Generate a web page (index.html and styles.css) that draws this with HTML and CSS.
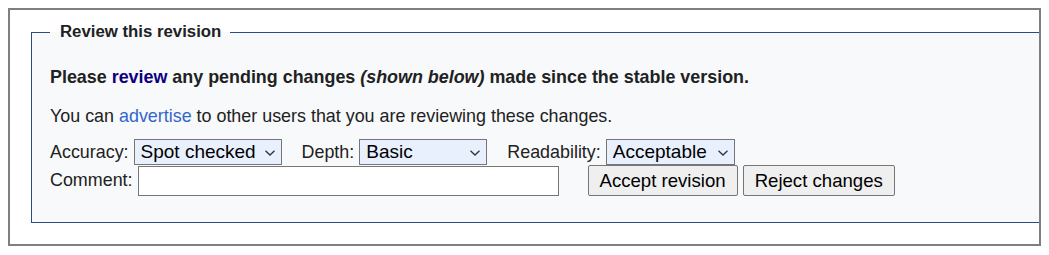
FILE: index.html
```html
<!DOCTYPE html>
<html lang="en">
<head>
<meta charset="utf-8">
<title>Review this revision</title>
<link rel="stylesheet" href="styles.css">
</head>
<body>
<div class="frame">
  <fieldset class="review">
    <legend class="review-legend">Review this revision</legend>
    <p class="lead">Please <a class="link-visited" href="#">review</a> any pending changes <i>(shown below)</i> made since the stable version.</p>
    <p class="note">You can <a class="link" href="#">advertise</a> to other users that you are reviewing these changes.</p>
    <div class="ratings">
      <label class="field-label" for="acc">Accuracy:</label>
      <span class="select-wrap">
        <select id="acc" class="select sel-acc"><option>Spot checked</option></select>
        <svg class="chev" viewBox="0 0 10 6" width="10" height="6" aria-hidden="true"><path d="M0.5 0.8 L5 5 L9.5 0.8" fill="none" stroke="#333" stroke-width="1.3"/></svg>
      </span>
      <label class="field-label gap" for="dep">Depth:</label>
      <span class="select-wrap">
        <select id="dep" class="select sel-dep"><option>Basic</option></select>
        <svg class="chev" viewBox="0 0 10 6" width="10" height="6" aria-hidden="true"><path d="M0.5 0.8 L5 5 L9.5 0.8" fill="none" stroke="#333" stroke-width="1.3"/></svg>
      </span>
      <label class="field-label gap" for="rea">Readability:</label>
      <span class="select-wrap">
        <select id="rea" class="select sel-rea"><option>Acceptable</option></select>
        <svg class="chev" viewBox="0 0 10 6" width="10" height="6" aria-hidden="true"><path d="M0.5 0.8 L5 5 L9.5 0.8" fill="none" stroke="#333" stroke-width="1.3"/></svg>
      </span>
    </div>
    <div class="actions">
      <label class="field-label" for="cmt">Comment:</label>
      <input id="cmt" class="comment" type="text">
      <button class="btn btn-accept" type="button">Accept revision</button>
      <button class="btn" type="button">Reject changes</button>
    </div>
  </fieldset>
</div>
</body>
</html>
```

FILE: styles.css
```css
html, body {
  margin: 0;
  padding: 0;
  background: #ffffff;
}
body {
  margin: 8px;
  font-family: "Liberation Sans", Arial, sans-serif;
  font-size: 17.9px;
  color: #202122;
}
.frame {
  border: 2px solid #7f7f7f;
  padding: 12px 0 21px 21px;
  overflow: hidden;
}
.review {
  margin: 0;
  border: 1px solid #2a4b8d;
  border-right: none;
  background: #f8f9fa;
  padding: 24px 0 26px 18px;
}
.review-legend {
  font-weight: bold;
  font-size: 16.8px;
  padding: 0 9px 0 10px;
  line-height: 20px;
}
p {
  margin: 0 0 17px;
  line-height: 22px;
}
.lead {
  font-weight: bold;
}
.link-visited {
  color: #0b0080;
  text-decoration: none;
}
.link {
  color: #3366cc;
  text-decoration: none;
}
.note {
  margin-bottom: 12px;
}
.ratings, .actions {
  display: flex;
  align-items: center;
}
.field-label {
  margin-right: 5px;
}
.gap {
  margin-left: 20px;
}
.select-wrap {
  position: relative;
  display: inline-flex;
}
.select {
  -webkit-appearance: none;
  appearance: none;
  font-family: "Liberation Sans", Arial, sans-serif;
  font-size: 19px;
  color: #000;
  height: 26px;
  line-height: 24px;
  background-color: #e8f0fe;
  border: 1px solid #767676;
  border-radius: 0;
  padding: 0 20px 0 6px;
  margin: 0;
  box-sizing: border-box;
}
.chev {
  position: absolute;
  right: 7px;
  top: 11px;
  pointer-events: none;
}
.sel-acc { width: 148px; }
.sel-dep { width: 128px; }
.sel-rea { width: 129px; }
.comment {
  width: 421px;
  height: 30px;
  box-sizing: border-box;
  border: 1px solid #767676;
  background: #fff;
  font-size: 18.6px;
  margin: 0;
}
.btn {
  font-family: "Liberation Sans", Arial, sans-serif;
  font-size: 18.6px;
  color: #000;
  background: #efefef;
  border: 1px solid #767676;
  border-radius: 2px;
  height: 31px;
  padding: 0 11px;
  margin: 0;
}
.btn-accept {
  margin-left: 29px;
  margin-right: 5px;
}
```
